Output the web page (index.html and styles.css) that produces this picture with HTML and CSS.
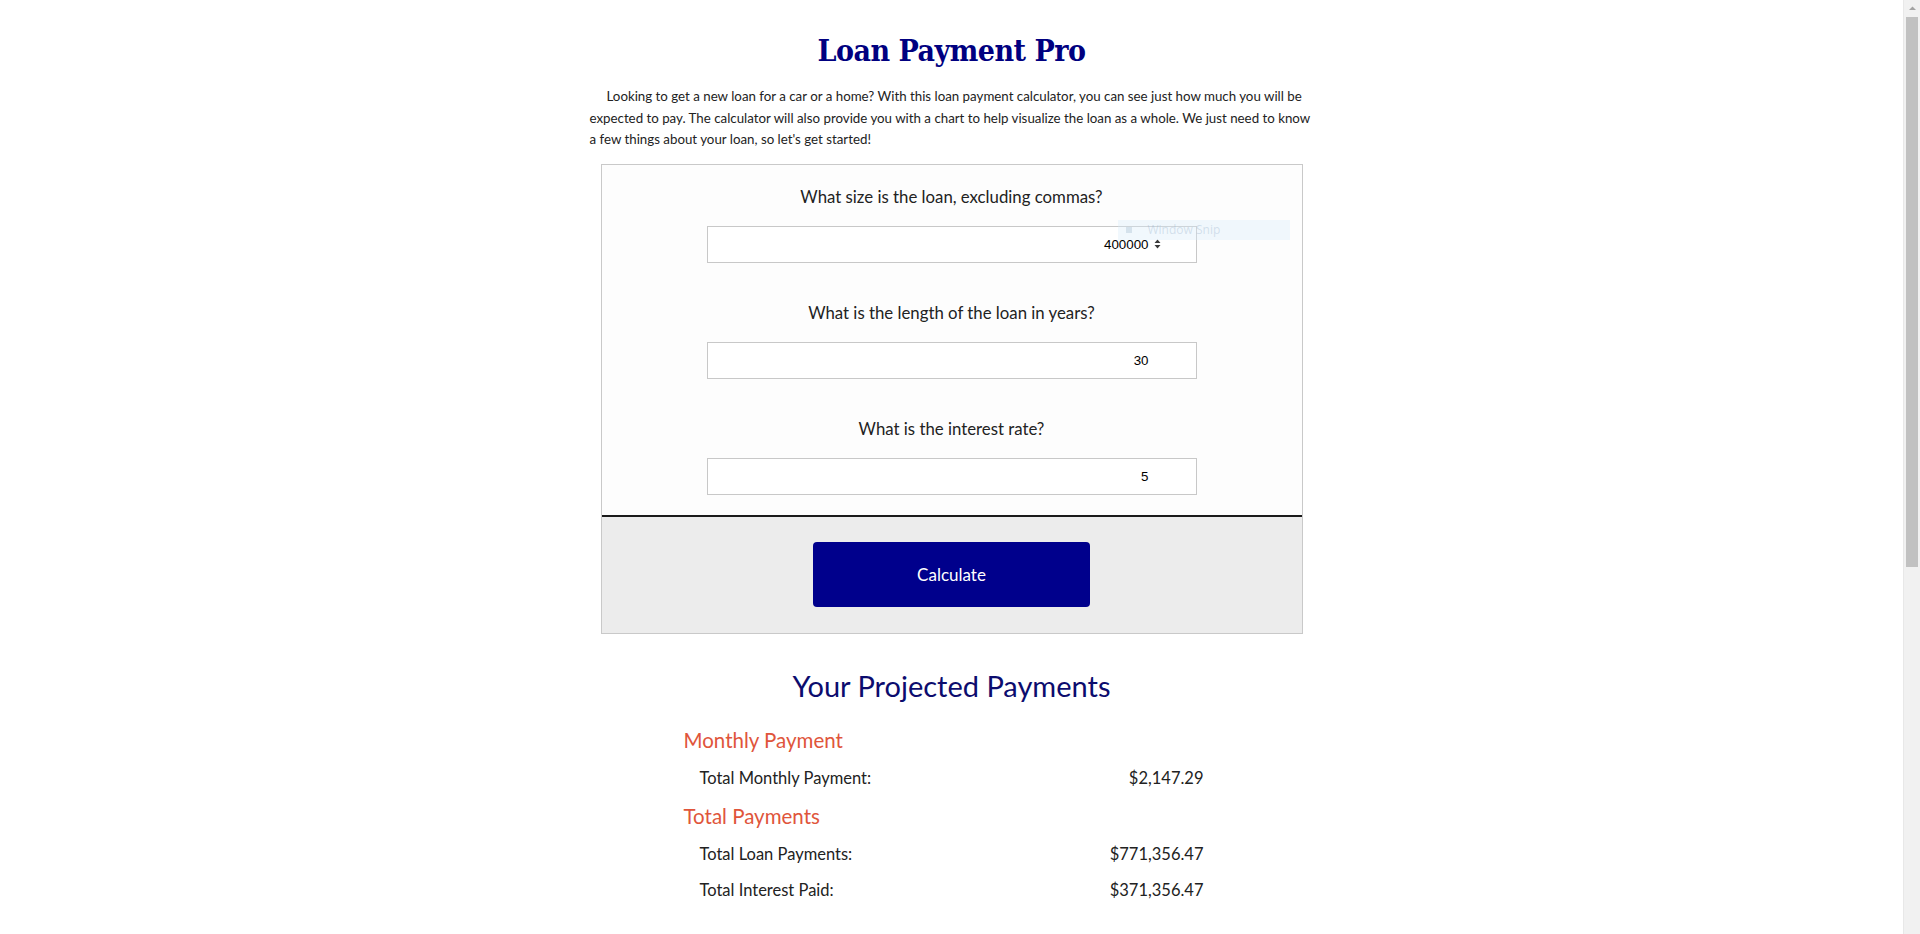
FILE: index.html
```html
<!DOCTYPE html>
<html lang="en">
<head>
<meta charset="utf-8">
<title>Loan Payment Pro</title>
<link rel="stylesheet" href="styles.css">
</head>
<body>
<main class="page">
  <h1 class="title">Loan Payment Pro</h1>
  <p class="intro">Looking to get a new loan for a car or a home? With this loan payment calculator, you can see just how much you will be expected to pay. The calculator will also provide you with a chart to help visualize the loan as a whole. We just need to know a few things about your loan, so let's get started!</p>

  <section class="panel">
    <div class="form">
      <div class="field">
        <label class="field-label" for="amount">What size is the loan, excluding commas?</label>
        <div class="input-wrap">
          <input class="field-input" id="amount" type="number" value="400000">
          <svg class="spinner" width="7" height="10" viewBox="0 0 7 10"><path d="M3.5 0.5 L6.5 4 H0.5 Z M3.5 9.5 L6.5 6 H0.5 Z" fill="#3a3a3a"/></svg>
        </div>
      </div>
      <div class="field">
        <label class="field-label" for="years">What is the length of the loan in years?</label>
        <div class="input-wrap">
          <input class="field-input" id="years" type="number" value="30">
        </div>
      </div>
      <div class="field">
        <label class="field-label" for="rate">What is the interest rate?</label>
        <div class="input-wrap">
          <input class="field-input" id="rate" type="number" value="5">
        </div>
      </div>
    </div>
    <div class="actions">
      <button class="calc-btn" type="button">Calculate</button>
    </div>
    <div class="snip-tip"><span class="snip-icon"></span><span>Window Snip</span></div>
  </section>

  <section class="results">
    <h2 class="results-title">Your Projected Payments</h2>
    <div class="results-list">
      <h3 class="group-title">Monthly Payment</h3>
      <div class="row"><span>Total Monthly Payment:</span><span>$2,147.29</span></div>
      <h3 class="group-title">Total Payments</h3>
      <div class="row"><span>Total Loan Payments:</span><span>$771,356.47</span></div>
      <div class="row"><span>Total Interest Paid:</span><span>$371,356.47</span></div>
    </div>
    <div class="chart"></div>
  </section>
</main>
<div class="scrollbar" aria-hidden="true">
  <svg class="scroll-arrow" width="17" height="17" viewBox="0 0 17 17"><path d="M5 10 L8.5 6.5 L12 10 Z" fill="#a3a3a3"/></svg>
  <div class="scroll-thumb"></div>
</div>
</body>
</html>
```

FILE: styles.css
```css
html, body {
  margin: 0;
  padding: 0;
  background: #ffffff;
}

body {
  font-family: Lato, "Noto Sans", sans-serif;
  color: #222222;
  padding-right: 17px;
}

.page {
  width: 724px;
  margin: 0 auto;
  padding-top: 30px;
  display: flex;
  flex-direction: column;
  align-items: center;
}

.title {
  margin: 0;
  font-family: "DejaVu Serif", "Liberation Serif", serif;
  font-stretch: condensed;
  font-weight: bold;
  font-size: 30px;
  line-height: 42px;
  color: #000080;
  letter-spacing: -0.5px;
}

.intro {
  margin: 14px 0 0;
  width: 100%;
  font-size: 13.3px;
  line-height: 21.5px;
  text-indent: 17px;
  color: #222222;
}

.panel {
  position: relative;
  margin-top: 13px;
  width: 702px;
  box-sizing: border-box;
  border: 1px solid #c9c9c9;
  background: #fdfdfd;
}

.form {
  padding: 20px 0 20px;
  display: flex;
  flex-direction: column;
  gap: 38px;
  border-bottom: 2px solid #1a1a1a;
}

.field {
  display: flex;
  flex-direction: column;
  align-items: center;
  gap: 17px;
}

.field-label {
  font-size: 16.8px;
  line-height: 24px;
  color: #222222;
}

.input-wrap {
  position: relative;
  width: 70%;
}

.field-input {
  display: block;
  width: 100%;
  height: 37px;
  box-sizing: border-box;
  border: 1px solid #c8c8c8;
  background: #ffffff;
  padding: 0 47px 0 2px;
  margin: 0;
  text-align: right;
  font-family: "Liberation Sans", Arial, sans-serif;
  font-size: 13.333px;
  color: #000000;
  -moz-appearance: textfield;
}

.field-input::-webkit-inner-spin-button,
.field-input::-webkit-outer-spin-button {
  -webkit-appearance: none;
  margin: 0;
}

.spinner {
  position: absolute;
  right: 36px;
  top: 13px;
}

.actions {
  background: #ececec;
  padding: 25px 0 26px;
  display: flex;
  justify-content: center;
}

.calc-btn {
  width: 277px;
  height: 65px;
  border: none;
  border-radius: 4px;
  background: #00008c;
  color: #ffffff;
  font-family: Lato, "Noto Sans", sans-serif;
  font-size: 17px;
  cursor: pointer;
}

.snip-tip {
  position: absolute;
  left: 516px;
  top: 55px;
  width: 172px;
  height: 20px;
  background: rgba(214, 234, 250, 0.35);
  display: flex;
  align-items: center;
  gap: 16px;
  padding-left: 8px;
  box-sizing: border-box;
  font-family: "Open Sans", sans-serif;
  font-size: 12px;
  color: rgba(150, 175, 200, 0.35);
  pointer-events: none;
}

.snip-icon {
  width: 6px;
  height: 6px;
  background: rgba(150, 175, 200, 0.3);
}

.results {
  width: 536px;
  margin-top: 32px;
  display: flex;
  flex-direction: column;
}

.results-title {
  margin: 0;
  text-align: center;
  font-weight: normal;
  font-size: 29px;
  line-height: 40px;
  color: #0c0c6e;
}

.results-list {
  margin-top: 20px;
  display: flex;
  flex-direction: column;
  gap: 12px;
}

.group-title {
  margin: 0;
  font-weight: normal;
  font-size: 20.5px;
  line-height: 28px;
  color: #e0553b;
}

.row {
  display: flex;
  justify-content: space-between;
  padding: 0 16px;
  font-size: 16.5px;
  line-height: 24px;
  color: #222222;
}

.chart {
  height: 560px;
  margin: 40px 0 30px;
}

.scrollbar {
  position: fixed;
  top: 0;
  right: 0;
  bottom: 0;
  width: 17px;
  background: #f1f1f1;
  border-left: 1px solid #e8e8e8;
  box-sizing: border-box;
  display: flex;
  flex-direction: column;
  align-items: center;
}

.scroll-arrow {
  display: block;
  flex: none;
}

.scroll-thumb {
  width: 12px;
  height: 550px;
  background: #c1c1c1;
}
```
